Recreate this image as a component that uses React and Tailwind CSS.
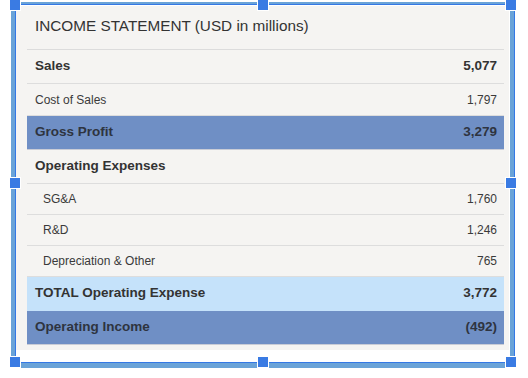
import React from "react";

const rows = [
  { label: "Sales", value: "5,077", kind: "bold", h: "h-[34px]" },
  { label: "Cost of Sales", value: "1,797", kind: "reg", h: "h-[32px]" },
  { label: "Gross Profit", value: "3,279", kind: "dark", h: "h-[34px]" },
  { label: "Operating Expenses", value: "", kind: "bold", h: "h-[34px]" },
  { label: "SG&A", value: "1,760", kind: "sub", h: "h-[31px]" },
  { label: "R&D", value: "1,246", kind: "sub", h: "h-[31px]" },
  { label: "Depreciation & Other", value: "765", kind: "sub", h: "h-[31px]" },
  { label: "TOTAL Operating Expense", value: "3,772", kind: "light", h: "h-[34px]" },
  { label: "Operating Income", value: "(492)", kind: "dark", h: "h-[34px]" },
];

const kindClass = {
  bold: "border-[#dddddd] pl-[8px] text-[13.5px] font-bold text-[#333333]",
  reg: "border-[#dddddd] pl-[8px] text-[12px] text-[#3a3a3a]",
  sub: "border-[#dddddd] pl-[16px] text-[12px] text-[#3a3a3a]",
  dark: "border-[#c9ccd6] bg-[#6f8fc5] pl-[8px] text-[13.5px] font-bold text-[#2e3440]",
  light: "border-[#c5e2fa] bg-[#c5e2fa] pl-[8px] text-[13.5px] font-bold text-[#333333]",
};

function Row({ r }) {
  return (
    <div
      className={
        "box-border flex items-center justify-between border-b pr-[7px] " +
        r.h +
        " " +
        kindClass[r.kind]
      }
    >
      <span>{r.label}</span>
      <span>{r.value}</span>
    </div>
  );
}

function Handle({ pos }) {
  return (
    <div
      className={
        "absolute h-[10px] w-[10px] bg-[#3a7be3] outline outline-1 outline-white " + pos
      }
    />
  );
}

export default function App() {
  return (
    <div
      className="relative h-[378px] w-[528px] overflow-hidden bg-white pl-[11px] pt-[2px]"
      style={{ fontFamily: '"Liberation Sans", Arial, sans-serif' }}
    >
      {/* selection frame (flow) */}
      <div className="box-border flex h-[366px] w-[504px] border-b-[5px] border-l-[4px] border-r-[1px] border-t-[2px] border-b-[#6aa3d8] border-l-[#6aa3d8] border-r-[#3478e5] border-t-[#6aa3d8]">
        <div className="box-border flex flex-1 flex-col border-b border-l border-r-[4px] border-t border-b-[#3478e5] border-l-[#3478e5] border-r-[#6aa3d8] border-t-[#3478e5] bg-white pt-[1px]">
          <div className="box-border h-[344px] w-[493px] bg-[#f5f4f2] pl-[11px] pr-[5px]">
            <div className="box-border h-[44px] border-b border-[#dcdcdc] pl-[8px] pt-[11px] text-[15.3px] leading-[17px] text-[#333333]">
              INCOME STATEMENT (USD in millions)
            </div>
            {rows.map((r) => (
              <Row key={r.label} r={r} />
            ))}
          </div>
        </div>
      </div>

      {/* selection handles overlay */}
      <Handle pos="left-[10px] top-0" />
      <Handle pos="left-[258px] top-0" />
      <Handle pos="left-[506px] top-0" />
      <Handle pos="left-[10px] top-[178px]" />
      <Handle pos="left-[506px] top-[178px]" />
      <Handle pos="left-[10px] top-[357px]" />
      <Handle pos="left-[258px] top-[357px]" />
      <Handle pos="left-[506px] top-[357px]" />
    </div>
  );
}
